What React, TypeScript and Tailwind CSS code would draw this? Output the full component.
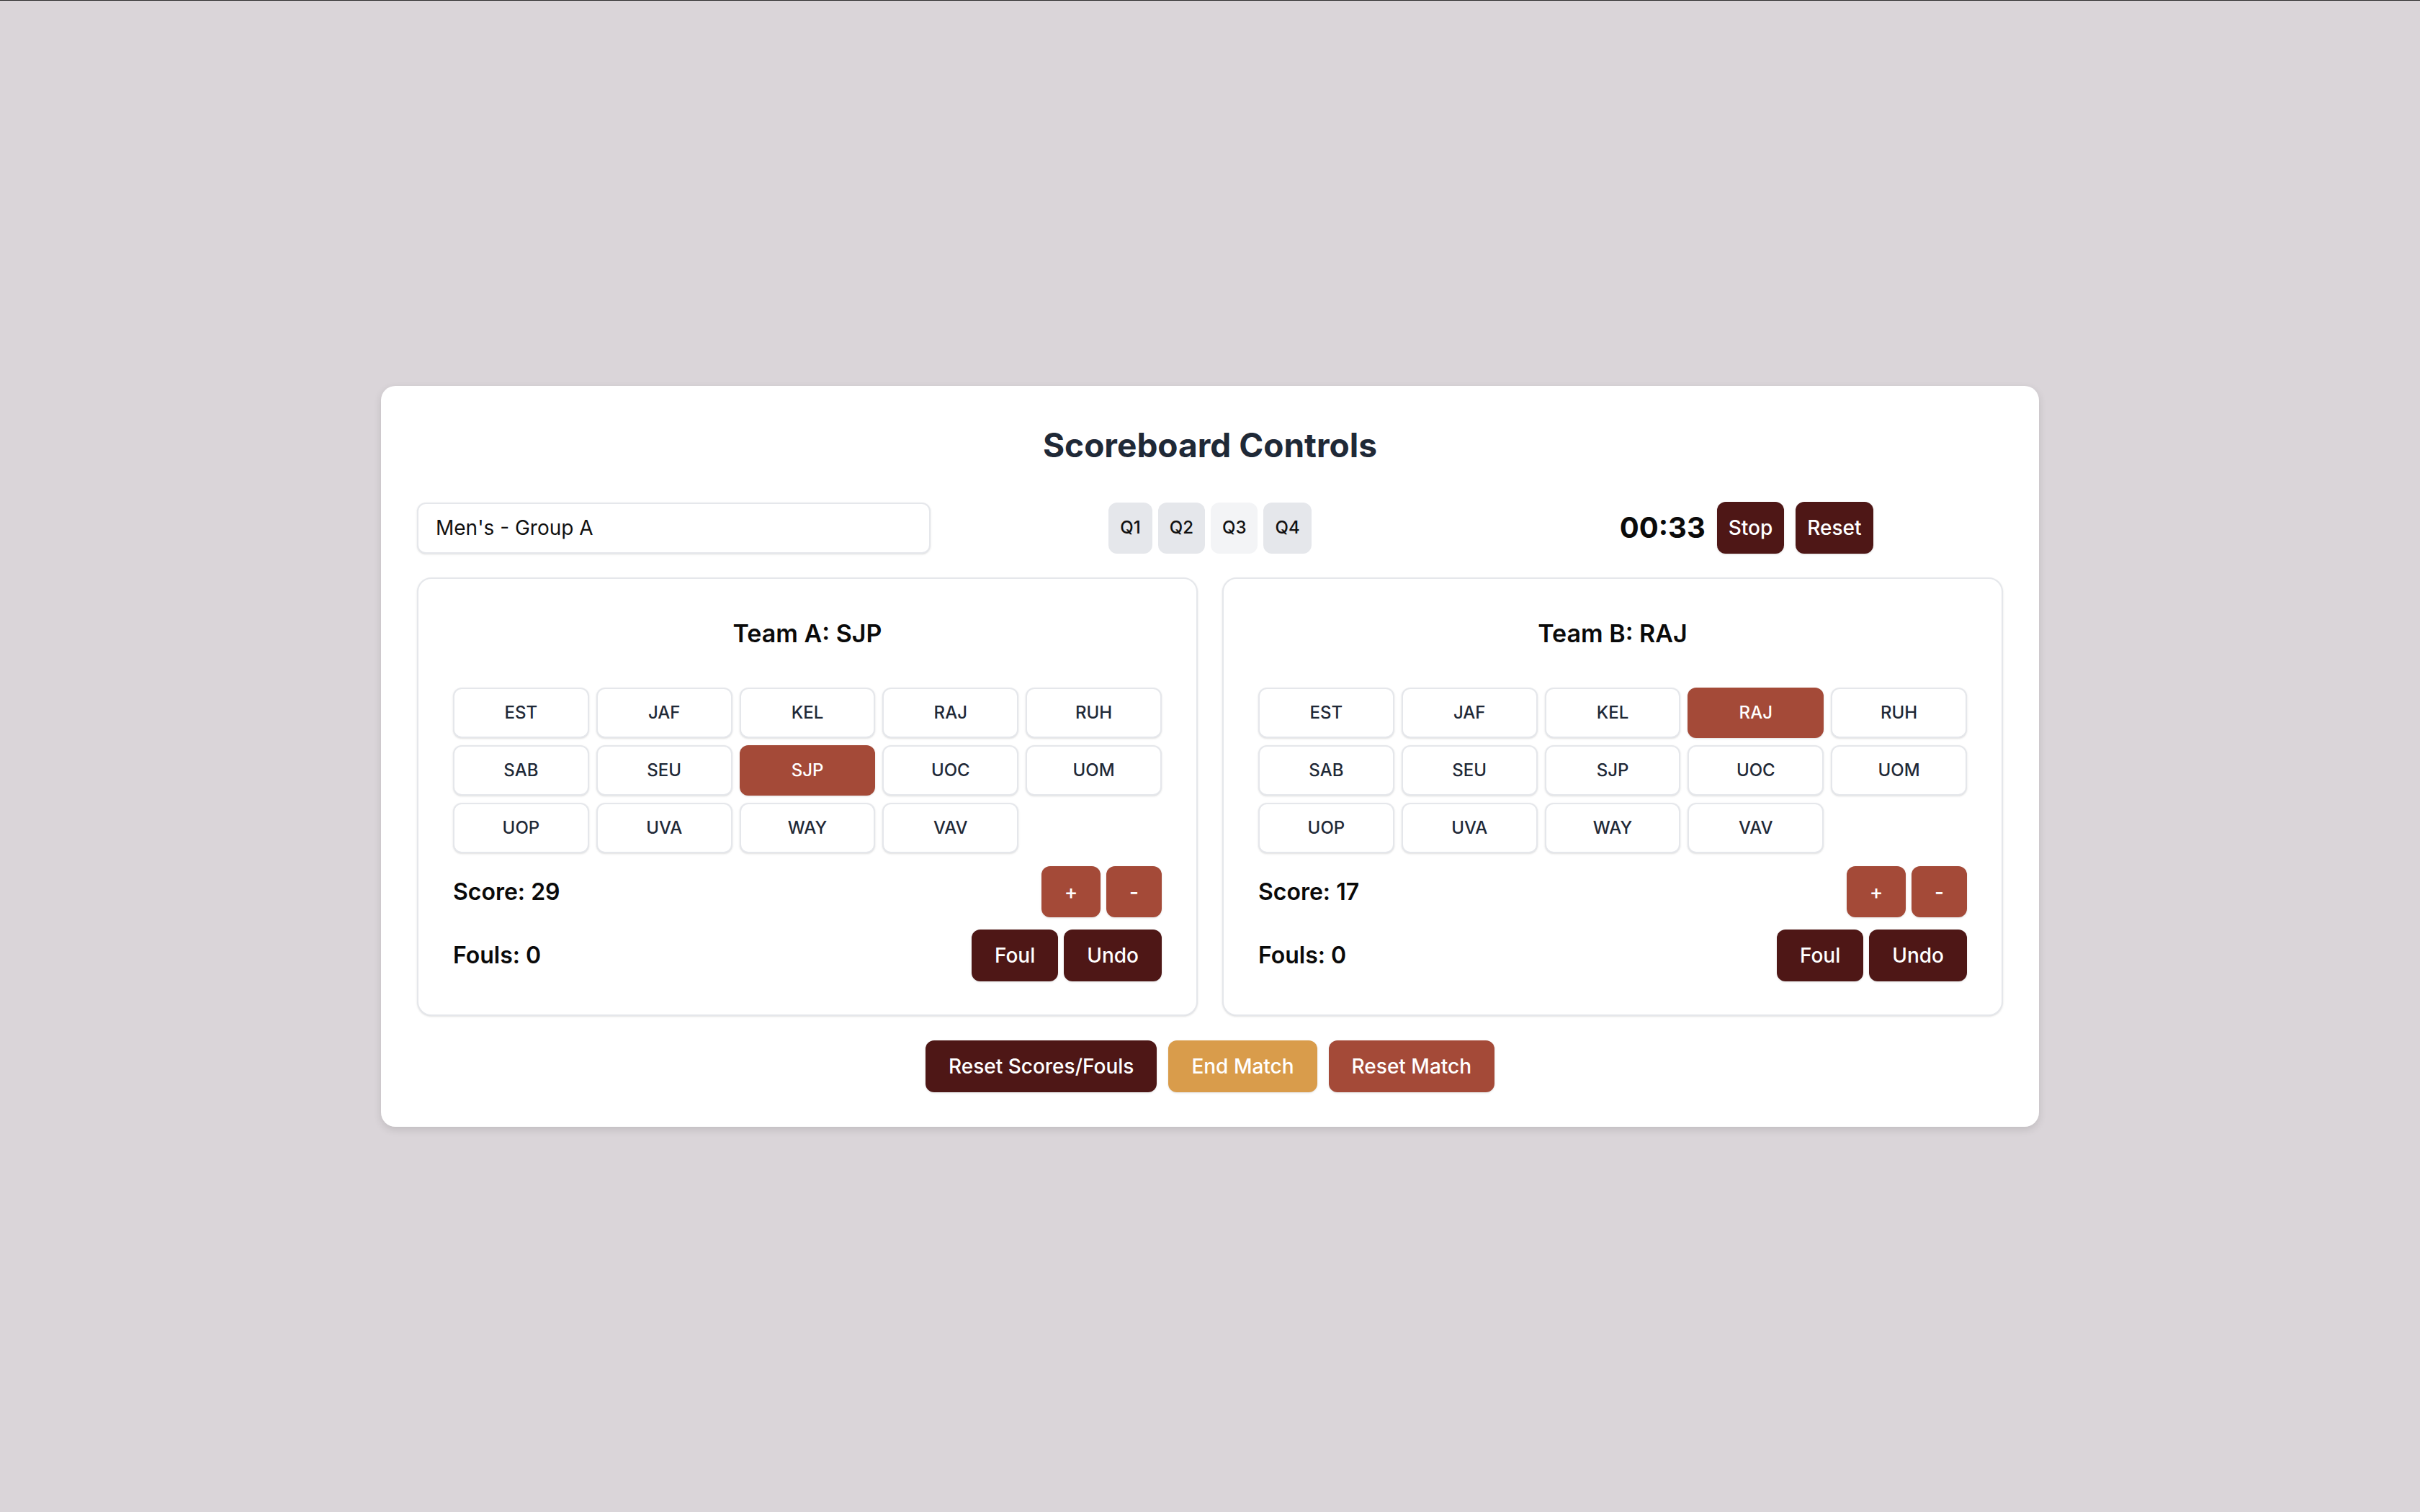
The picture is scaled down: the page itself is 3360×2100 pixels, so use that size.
import React from "react";

const TEAMS = ["EST", "JAF", "KEL", "RAJ", "RUH", "SAB", "SEU", "SJP", "UOC", "UOM", "UOP", "UVA", "WAY", "VAV"];

function TeamPanel({ label, selected, score, fouls }: { label: string; selected: string; score: number; fouls: number }) {
  return (
    <div className="flex flex-col rounded-[20px] border-2 border-[#e5e7eb] bg-white px-[48px] pt-[52px] pb-[46px] shadow-sm">
      <h2 className="text-center text-[34px] leading-[48px] font-semibold text-[#0a0a0a]">
        Team {label}: {selected}
      </h2>
      <div className="mt-[51px] grid grid-cols-5 gap-[10px]">
        {TEAMS.map((t) =>
          t === selected ? (
            <button
              key={t}
              className="h-[70px] rounded-[12px] bg-[#a44a38] text-[24px] font-medium text-white shadow-sm"
            >
              {t}
            </button>
          ) : (
            <button
              key={t}
              className="h-[70px] rounded-[12px] border-2 border-[#e5e7eb] bg-white text-[24px] font-medium text-[#1f2937] shadow-sm"
            >
              {t}
            </button>
          )
        )}
      </div>
      <div className="mt-[18px] flex items-center justify-between">
        <span className="text-[32px] font-semibold text-[#0a0a0a]">Score: {score}</span>
        <div className="flex gap-[8px]">
          <button className="h-[71px] w-[82px] rounded-[12px] bg-[#a44a38] text-[28px] font-medium text-white shadow-sm">+</button>
          <button className="h-[71px] w-[77px] rounded-[12px] bg-[#a44a38] text-[28px] font-medium text-white shadow-sm">-</button>
        </div>
      </div>
      <div className="mt-[17px] flex items-center justify-between">
        <span className="text-[32px] font-semibold text-[#0a0a0a]">Fouls: {fouls}</span>
        <div className="flex gap-[8px]">
          <button className="h-[72px] rounded-[12px] bg-[#4e1716] px-[32px] text-[28px] font-medium text-white shadow-sm">Foul</button>
          <button className="h-[72px] rounded-[12px] bg-[#4e1716] px-[32px] text-[28px] font-medium text-white shadow-sm">Undo</button>
        </div>
      </div>
    </div>
  );
}

export default function App() {
  return (
    <div
      className="flex min-h-screen items-center justify-center border-t border-[#2e2e2e] bg-[#dad5d9]"
      style={{ fontFamily: "Inter, 'Noto Sans', 'Liberation Sans', sans-serif" }}
    >
      <div className="w-[2302px] rounded-[20px] bg-white px-[50px] pt-[49px] pb-[48px] shadow-[0_4px_12px_rgba(0,0,0,0.12)]">
        <h1 className="text-center text-[46px] leading-[66px] font-bold text-[#1f2937]">Scoreboard Controls</h1>

        <div className="mt-[46px] grid grid-cols-3 items-center gap-8">
          <div className="flex h-[71px] items-center rounded-[12px] border-2 border-[#e5e7eb] bg-white px-[24px] text-[28px] text-[#111111] shadow-sm">
            Men's - Group A
          </div>
          <div className="flex justify-center gap-[8px]">
            <button className="h-[71px] rounded-[12px] bg-[#e5e7eb] px-[16px] text-[24px] font-medium text-[#111111]">Q1</button>
            <button className="h-[71px] rounded-[12px] bg-[#e5e7eb] px-[16px] text-[24px] font-medium text-[#111111]">Q2</button>
            <button className="h-[71px] rounded-[12px] bg-[#f3f4f6] px-[16px] text-[24px] font-medium text-[#111111]">Q3</button>
            <button className="h-[71px] rounded-[12px] bg-[#e5e7eb] px-[16px] text-[24px] font-medium text-[#111111]">Q4</button>
          </div>
          <div className="flex items-center justify-center gap-4">
            <span className="text-[40px] font-bold text-[#0a0a0a]">00:33</span>
            <button className="h-[72px] rounded-[12px] bg-[#4e1716] px-[16px] text-[28px] font-medium text-white shadow-sm">Stop</button>
            <button className="h-[72px] rounded-[12px] bg-[#4e1716] px-[16px] text-[28px] font-medium text-white shadow-sm">Reset</button>
          </div>
        </div>

        <div className="mt-[33px] grid grid-cols-2 gap-[34px]">
          <TeamPanel label="A" selected="SJP" score={29} fouls={0} />
          <TeamPanel label="B" selected="RAJ" score={17} fouls={0} />
        </div>

        <div className="mt-[34px] flex justify-center gap-[16px]">
          <button className="h-[72px] rounded-[12px] bg-[#4e1716] px-[32px] text-[28px] font-medium text-white shadow-sm">Reset Scores/Fouls</button>
          <button className="h-[72px] rounded-[12px] bg-[#d99c4b] px-[32px] text-[28px] font-medium text-white shadow-sm">End Match</button>
          <button className="h-[72px] rounded-[12px] bg-[#a44a38] px-[32px] text-[28px] font-medium text-white shadow-sm">Reset Match</button>
        </div>
      </div>
    </div>
  );
}
